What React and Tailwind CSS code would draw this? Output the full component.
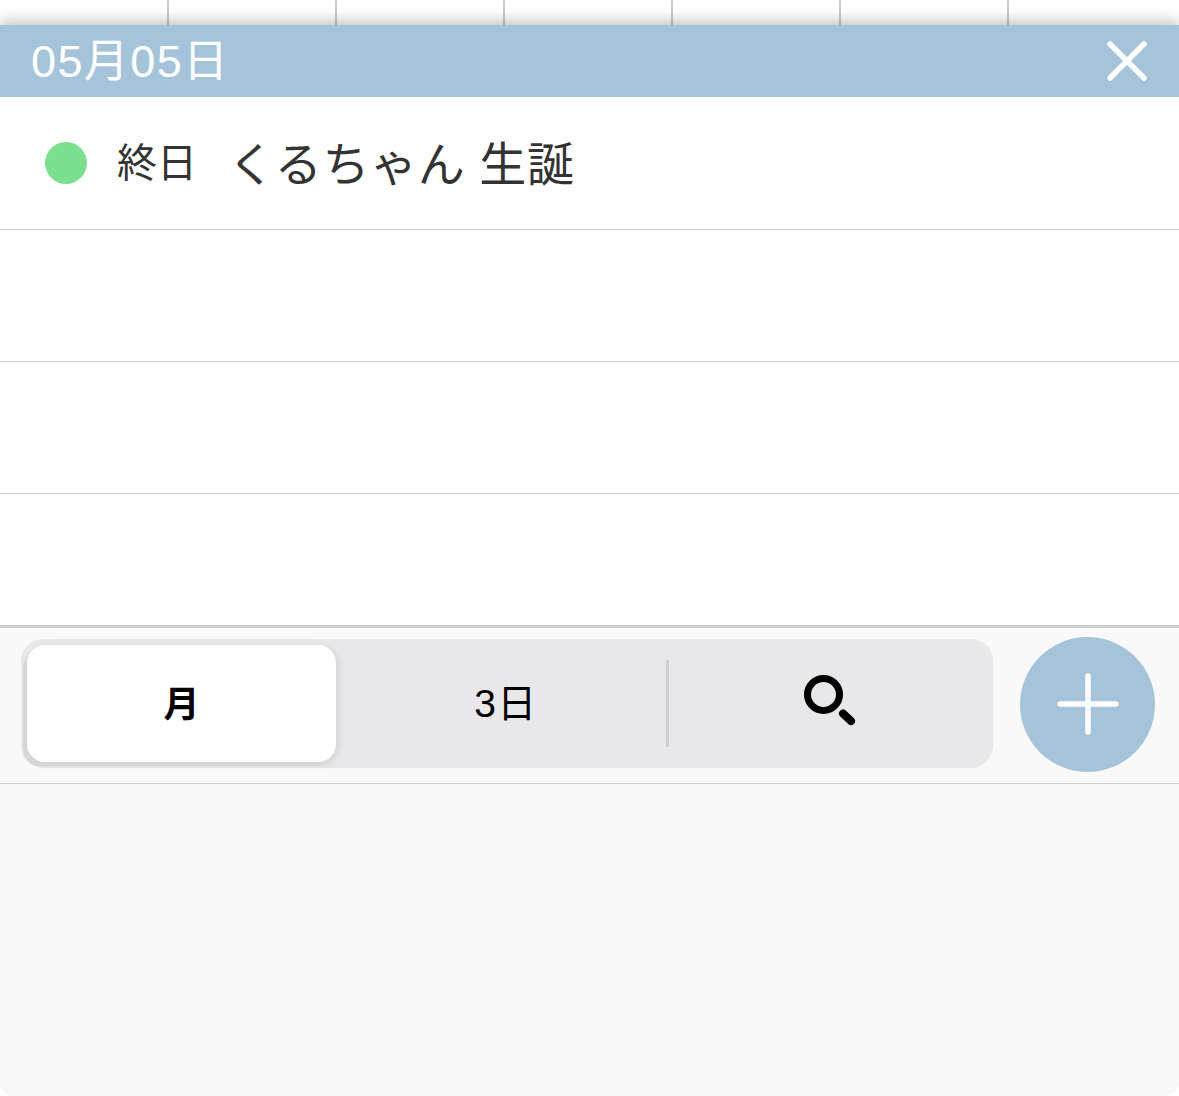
const FONT = "font-['Liberation_Sans','Noto_Sans_CJK_JP',sans-serif]";

function CalendarStrip() {
  return (
    <div className="flex h-[25px] bg-white">
      <div className="w-[169px] shrink-0 border-r-2 border-[#c9c9c9]" />
      {[1, 2, 3, 4, 5].map((i) => (
        <div key={i} className="w-[168px] shrink-0 border-r-2 border-[#c9c9c9]" />
      ))}
    </div>
  );
}

function EmptyRow() {
  return <div className="h-[132px] border-b border-[#cfcfcf] bg-white" />;
}

export default function App() {
  return (
    <div className={`${FONT} flex h-[1096px] w-[1179px] flex-col overflow-hidden bg-white`}>
      <CalendarStrip />

      <div className="relative flex h-[72px] items-center justify-between bg-[#a6c4d9] pl-[31px] pr-[31px] shadow-[0_-4px_14px_rgba(0,0,0,0.24)]">
        <span className="text-[45px] leading-none tracking-[1.4px] text-white">05月05日</span>
        <svg width="42" height="42" viewBox="0 0 42 42" fill="none" stroke="white" strokeWidth="5.5" strokeLinecap="round">
          <path d="M4 4 L38 38 M38 4 L4 38" />
        </svg>
      </div>

      <div className="relative flex h-[133px] items-center border-b border-[#cfcfcf] bg-white pl-[45px] text-[#333333]">
        <span className="h-[42px] w-[42px] rounded-full bg-[#7bdf8f]" />
        <span className="ml-[30px] text-[40px] leading-none">終日</span>
        <span className="ml-[31px] pt-[2px] text-[47px] leading-none tracking-[0.7px]">くるちゃん 生誕</span>
      </div>
      <EmptyRow />
      <EmptyRow />
      <EmptyRow />

      <div className="flex h-[158px] items-start border-b border-t-2 border-b-[#cfcfcf] border-t-[#cdcdcd] bg-[#f9f9f9] pl-[21px] pt-[11px]">
        <div className="flex h-[129px] w-[972px] items-center rounded-[22px] bg-[#e8e8ea] p-[6px]">
          <div className="flex h-[117px] w-[309px] items-center justify-center rounded-[18px] bg-white pt-[2px] text-[36px] font-bold text-black shadow-[-5px_5px_0_-1px_#d6d6d8,2px_2px_8px_rgba(0,0,0,0.1)]">
            月
          </div>
          <div className="flex h-[117px] w-[330px] items-center justify-center pl-[10px] pt-[2px] text-[39px] tracking-[1.5px] text-black">
            3日
          </div>
          <div className="h-[87px] w-[3px] bg-[#d0d0d3]" />
          <div className="flex h-[117px] flex-1 items-center justify-center pb-[6px] pl-[3px]">
            <svg width="52" height="52" viewBox="0 0 52 52" fill="none" stroke="black" strokeLinecap="round">
              <circle cx="19.5" cy="19.5" r="16" strokeWidth="7" />
              <path d="M39 38.5 L47 46" strokeWidth="8" />
            </svg>
          </div>
        </div>
        <div className="-mt-[2px] ml-[27px] flex h-[135px] w-[135px] items-center justify-center rounded-full bg-[#a6c4d9] pb-[1px]">
          <svg width="62" height="62" viewBox="0 0 62 62" fill="none" stroke="white" strokeWidth="5.5" strokeLinecap="round">
            <path d="M31 3 V59 M3 31 H59" />
          </svg>
        </div>
      </div>

      <div className="flex-1 rounded-b-[14px] bg-[#f8f8f8]" />
    </div>
  );
}
